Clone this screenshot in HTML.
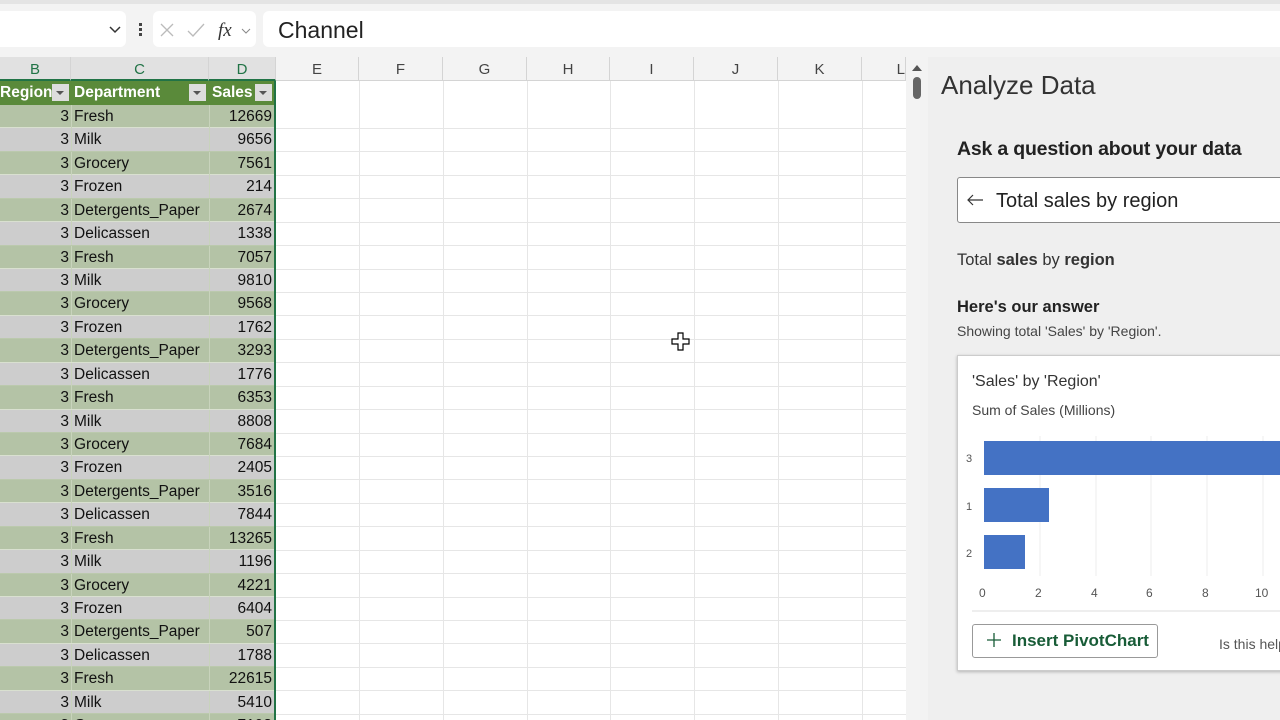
<!DOCTYPE html>
<html><head><style>
*{margin:0;padding:0;box-sizing:border-box}
body{width:1280px;height:720px;overflow:hidden;background:#f3f3f3;font-family:"Liberation Sans",sans-serif;position:relative}
.a{position:absolute}
.grid{left:0;top:57px;width:906px;height:663px;background:#fff;overflow:hidden}
.ch{top:0;height:24px;background:#f3f3f3;border-bottom:1px solid #d4d4d4;font-size:15px;color:#444;text-align:center;line-height:25px;border-right:1px solid #d4d4d4}
.ch.s{color:#217346;background:#e1e1e1;border-bottom:2px solid #217346}
.row{left:0;width:276px;height:23.43px;font-size:15.5px;color:#111;line-height:24px}
.row span{position:absolute;top:0}
.hl{position:absolute;left:276px;width:630px;height:1px;background:#e6e6e6}
.vl{position:absolute;top:24px;width:1px;height:640px;background:#e6e6e6}
</style></head><body>
<div class="a" style="left:0;top:0;width:1280px;height:4px;background:#e4e4e4"></div>
<div class="a" style="left:0;top:11px;width:126px;height:36px;background:#fff;border-radius:0 6px 6px 0"></div>
<svg class="a" style="left:108px;top:25px" width="14" height="10"><path d="M2 2 L7 7 L12 2" stroke="#333" stroke-width="1.5" fill="none"/></svg>
<div class="a" style="left:139px;top:23px;width:3px;height:3px;background:#444;box-shadow:0 5px #444,0 10px #444"></div>
<div class="a" style="left:153px;top:11px;width:103px;height:36px;background:#fff;border-radius:6px"></div>
<svg class="a" style="left:158px;top:21px" width="95" height="20"><path d="M3 3 L15 15 M15 3 L3 15" stroke="#bbb" stroke-width="1.3"/><path d="M30 10 L35 15 L46 3" stroke="#bbb" stroke-width="1.3" fill="none"/><text x="60" y="15" font-family="Liberation Serif" font-style="italic" font-size="19" fill="#333">fx</text><path d="M84 8 L88 12 L92 8" stroke="#888" fill="none"/></svg>
<div class="a" style="left:263px;top:11px;width:1017px;height:36px;background:#fff;border-radius:6px 0 0 6px;font-size:23px;line-height:38px;padding-left:15px;color:#222">Channel</div>

<div class="a grid">
<div class="a ch s" style="left:0;width:71px">B</div>
<div class="a ch s" style="left:71px;width:138px">C</div>
<div class="a ch s" style="left:209px;width:67px">D</div>
<div class="a ch" style="left:276px;width:83px">E</div>
<div class="a ch" style="left:359px;width:84px">F</div>
<div class="a ch" style="left:443px;width:84px">G</div>
<div class="a ch" style="left:527px;width:83px">H</div>
<div class="a ch" style="left:610px;width:84px">I</div>
<div class="a ch" style="left:694px;width:84px">J</div>
<div class="a ch" style="left:778px;width:84px">K</div>
<div class="a ch" style="left:862px;width:44px;text-align:right;padding-right:0">L</div>
<div class="vl" style="left:359px"></div><div class="vl" style="left:443px"></div><div class="vl" style="left:527px"></div><div class="vl" style="left:610px"></div><div class="vl" style="left:694px"></div><div class="vl" style="left:778px"></div><div class="vl" style="left:862px"></div>
<div id="rows"></div>
<div class="a" style="left:274px;top:24px;width:2px;height:640px;background:#217346"></div>
</div>

<div class="a" style="left:906px;top:57px;width:22px;height:663px;background:#f3f3f3"></div>
<svg class="a" style="left:910px;top:62px" width="14" height="40"><path d="M2 9 L7 3 L12 9Z" fill="#555"/><rect x="3" y="15" width="8" height="22" rx="4" fill="#666"/></svg>

<div class="a" style="left:928px;top:57px;width:352px;height:663px;background:#efefef;overflow:hidden">
<div class="a" style="left:13px;top:13px;font-size:26px;color:#333">Analyze Data</div>
<div class="a" style="left:29px;top:81px;font-size:19.5px;color:#222;font-weight:bold;letter-spacing:-.2px;white-space:nowrap">Ask a question about your data</div>
<div class="a" style="left:29px;top:120px;width:330px;height:46px;background:#fff;border:1px solid #888;border-radius:3px;font-size:20px;line-height:46px;padding-left:38px;color:#222">Total sales by region</div>
<svg class="a" style="left:38px;top:136px" width="18" height="14"><path d="M17 7 H2 M7 2 L2 7 L7 12" stroke="#333" stroke-width="1.2" fill="none"/></svg>
<div class="a" style="left:29px;top:194px;font-size:16.5px;color:#333">Total <b>sales</b> by <b>region</b></div>
<div class="a" style="left:29px;top:241px;font-size:16.5px;color:#222;font-weight:bold">Here's our answer</div>
<div class="a" style="left:29px;top:266px;font-size:14px;color:#444;white-space:nowrap">Showing total 'Sales' by 'Region'.</div>
<div class="a" style="left:29px;top:298px;width:340px;height:316px;background:#fff;border:1px solid #ccc;box-shadow:0 1px 3px rgba(0,0,0,.25)">
<div class="a" style="left:14px;top:17px;font-size:16px;color:#333">'Sales' by 'Region'</div>
<div class="a" style="left:14px;top:46px;font-size:14px;color:#444;white-space:nowrap">Sum of Sales (Millions)</div>
<svg class="a" style="left:0;top:80px" width="340" height="180">
<g stroke="#eee"><line x1="82" y1="0" x2="82" y2="140"/><line x1="138" y1="0" x2="138" y2="140"/><line x1="193" y1="0" x2="193" y2="140"/><line x1="249" y1="0" x2="249" y2="140"/><line x1="305" y1="0" x2="305" y2="140"/></g>
<rect x="26" y="5" width="314" height="34" fill="#4472c4"/>
<rect x="26" y="52" width="65" height="34" fill="#4472c4"/>
<rect x="26" y="99" width="41" height="34" fill="#4472c4"/>
<g font-size="11" fill="#555"><text x="8" y="26">3</text><text x="8" y="74">1</text><text x="8" y="121">2</text></g>
<g font-size="12" fill="#555"><text x="21" y="161">0</text><text x="77" y="161">2</text><text x="133" y="161">4</text><text x="188" y="161">6</text><text x="244" y="161">8</text><text x="297" y="161">10</text></g>
<line x1="14" y1="175" x2="340" y2="175" stroke="#ddd"/>
</svg>
<div class="a" style="left:14px;top:268px;width:186px;height:34px;border:1px solid #999;border-radius:3px;font-size:17px;font-weight:bold;color:#185c37;line-height:32px;padding-left:39px;white-space:nowrap">Insert PivotChart</div>
<svg class="a" style="left:28px;top:276px" width="16" height="16"><path d="M8 1V15M1 8H15" stroke="#185c37" stroke-width="1.3"/></svg>
<div class="a" style="left:261px;top:280px;font-size:14px;color:#555;white-space:nowrap">Is this helpful?</div>
</div>
</div>
<svg class="a" style="left:671px;top:332px" width="20" height="20"><path d="M7 1H12V7H18V12H12V18H7V12H1V7H7Z" fill="#fff" stroke="#000" stroke-width="1.2"/></svg>

<script>
var d=[["Fresh",12669],["Milk",9656],["Grocery",7561],["Frozen",214],["Detergents_Paper",2674],["Delicassen",1338],["Fresh",7057],["Milk",9810],["Grocery",9568],["Frozen",1762],["Detergents_Paper",3293],["Delicassen",1776],["Fresh",6353],["Milk",8808],["Grocery",7684],["Frozen",2405],["Detergents_Paper",3516],["Delicassen",7844],["Fresh",13265],["Milk",1196],["Grocery",4221],["Frozen",6404],["Detergents_Paper",507],["Delicassen",1788],["Fresh",22615],["Milk",5410],["Grocery",7198]];
var h='<div class="a" style="left:0;top:24px;width:276px;height:24px;background:#5a8a3a;color:#fff;font-weight:bold;font-size:15.5px;line-height:24px">'+
'<span class="a" style="left:0">Region</span><span class="a" style="left:74px">Department</span><span class="a" style="left:212px">Sales</span>'+
'<i class="a" style="left:52px;top:3px;width:17px;height:17px;background:#ddd"></i><i class="a" style="left:189px;top:3px;width:17px;height:17px;background:#ddd"></i><i class="a" style="left:255px;top:3px;width:17px;height:17px;background:#ddd"></i>'+
'<b class="a" style="left:56px;top:10px;border:4px solid transparent;border-top:4px solid #555"></b><b class="a" style="left:193px;top:10px;border:4px solid transparent;border-top:4px solid #555"></b><b class="a" style="left:259px;top:10px;border:4px solid transparent;border-top:4px solid #555"></b></div>';
for(var i=0;i<d.length;i++){var t=48+i*23.43;h+='<div class="a row" style="top:'+t+'px;background:'+(i%2?'#cdcdcd':'#b4c3a6')+';border-bottom:1px solid '+(i%2?'#bbc9ad':'#d9e0d0')+'"><span style="right:207px">3</span><span style="left:74px">'+d[i][0]+'</span><span style="right:4px">'+d[i][1]+'</span><i class="a" style="left:71px;top:0;width:1px;height:23px;background:#c8d3bc"></i><i class="a" style="left:209px;top:0;width:1px;height:23px;background:#c8d3bc"></i></div>';
h+='<div class="hl" style="top:'+(t+23)+'px"></div>';}
document.getElementById('rows').innerHTML=h;
</script>
</body></html>
